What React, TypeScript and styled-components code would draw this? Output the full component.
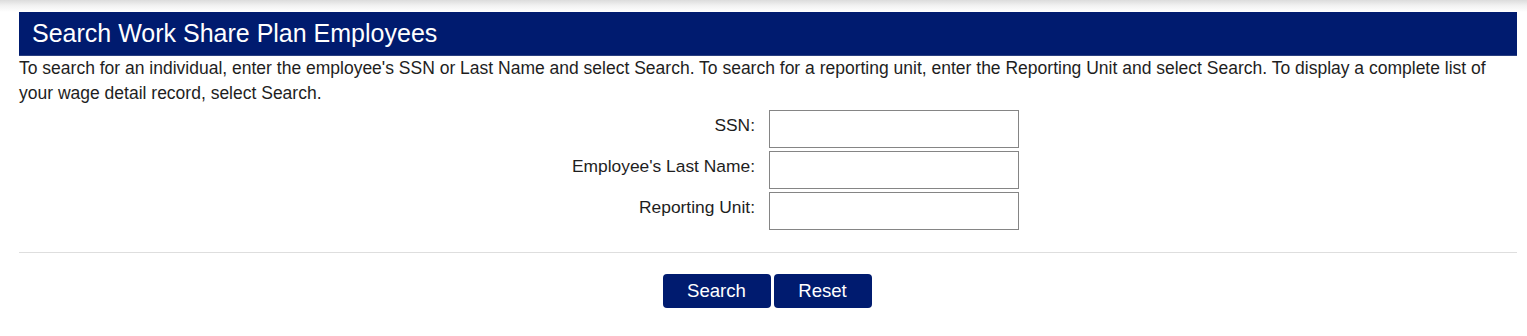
import React from "react";
import styled, { createGlobalStyle } from "styled-components";

const GlobalStyle = createGlobalStyle`
    body {
        margin: 0;
        background: #ffffff;
        font-family: "Liberation Sans", Arial, sans-serif;
        color: #1e1e1e;
    }
`;

const Page = styled.div`
    padding: 0 10px 0 19px;
`;

const TopShadow = styled.div`
    height: 12px;
    margin: 0 -6px 0 -4px;
    background: linear-gradient(to bottom, #dcdcdc 0%, #f1f1f1 45%, #ffffff 100%);
`;

const Header = styled.h1`
    margin: 0;
    height: 44px;
    display: flex;
    align-items: center;
    padding-left: 13px;
    background-color: #001b6f;
    border-bottom: 1px solid #2a3f80;
    box-sizing: border-box;
    color: #ffffff;
    font-size: 25px;
    font-weight: normal;
`;

const Intro = styled.p`
    margin: 0;
    padding-right: 24px;
    font-size: 17.5px;
    line-height: 25px;
`;

const Form = styled.div`
    margin-top: 4px;
    display: grid;
    grid-template-columns: 1fr 1fr;
    row-gap: 3px;
    align-items: start;
`;

const Label = styled.label`
    text-align: right;
    padding: 4px 13px 0 0;
    font-size: 17.4px;
    line-height: 22px;
`;

const Input = styled.input`
    display: block;
    width: 250px;
    height: 38px;
    margin-left: 1px;
    box-sizing: border-box;
    border: 1px solid #858585;
    background: #ffffff;
    font-family: inherit;
    font-size: 16px;
`;

const Divider = styled.hr`
    margin: 22px 0 21px;
    border: 0;
    border-top: 1px solid #dedede;
`;

const Actions = styled.div`
    display: flex;
    justify-content: center;
    gap: 3px;
    padding-right: 2px;
`;

const Button = styled.button<{ $width: number }>`
    width: ${(p) => p.$width}px;
    height: 34px;
    border: 0;
    border-radius: 4px;
    background-color: #001b6f;
    color: #ffffff;
    font-family: inherit;
    font-size: 18.6px;
    cursor: pointer;
`;

const fields = [
    { id: "ssn", label: "SSN:" },
    { id: "lastName", label: "Employee's Last Name:" },
    { id: "unit", label: "Reporting Unit:" },
];

const App: React.FC = () => {
    return (
        <>
            <GlobalStyle />
            <TopShadow />
            <Page>
                <Header>Search Work Share Plan Employees</Header>
                <Intro>
                    To search for an individual, enter the employee's SSN or Last Name and select Search. To search for a
                    reporting unit, enter the Reporting Unit and select Search. To display a complete list of your wage
                    detail record, select Search.
                </Intro>
                <Form>
                    {fields.map((f) => (
                        <React.Fragment key={f.id}>
                            <Label htmlFor={f.id}>{f.label}</Label>
                            <div>
                                <Input id={f.id} type="text" />
                            </div>
                        </React.Fragment>
                    ))}
                </Form>
                <Divider />
                <Actions>
                    <Button $width={108}>Search</Button>
                    <Button $width={98}>Reset</Button>
                </Actions>
            </Page>
        </>
    );
};

export default App;
